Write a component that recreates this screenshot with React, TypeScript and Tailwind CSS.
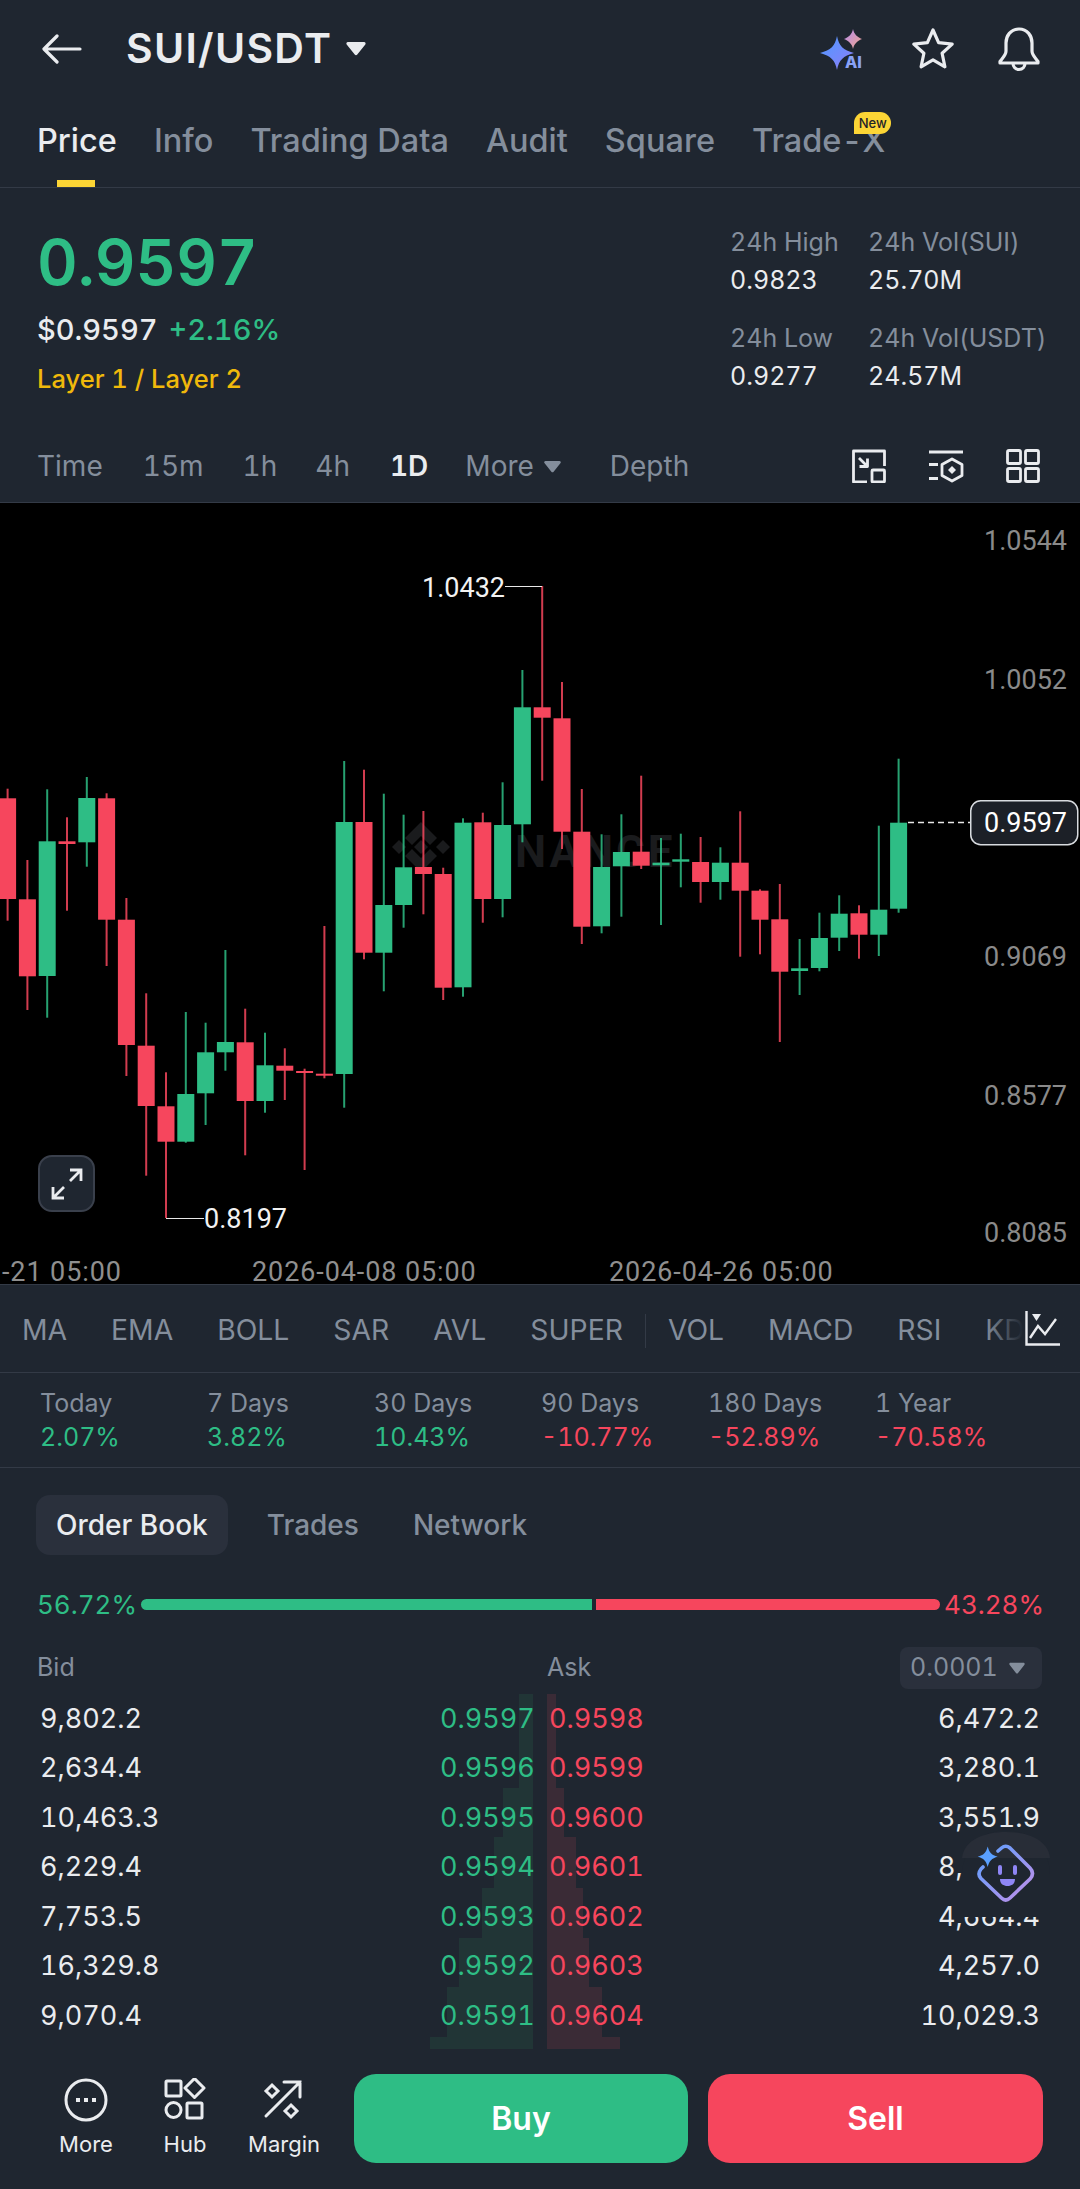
import React from 'react';

type Candle = [number, number, number, number, 'r' | 'g'];

const UP = '#2ebd85';
const DOWN = '#f6465d';

// high, body top, body bottom, low
const candles: Candle[] = [
  [788.7, 798.3, 899, 920.7, 'r'],
  [860, 899.3, 976.3, 1010, 'r'],
  [789.3, 841.3, 976, 1017.7, 'g'],
  [817.3, 841.3, 844, 910.7, 'r'],
  [777, 798, 842.3, 866.7, 'g'],
  [793.3, 798.3, 919.7, 966, 'r'],
  [898, 919.7, 1045, 1076, 'r'],
  [993.3, 1045.7, 1106, 1175.7, 'r'],
  [1072.3, 1106.3, 1141.7, 1218, 'r'],
  [1012, 1094, 1141.7, 1142.7, 'g'],
  [1022.7, 1052.3, 1093.3, 1125, 'g'],
  [950, 1042, 1052.3, 1070.7, 'g'],
  [1008.7, 1042.3, 1101, 1155.3, 'r'],
  [1032.7, 1065.3, 1101, 1112.7, 'g'],
  [1048.3, 1065.7, 1070.7, 1100, 'r'],
  [1068.7, 1071, 1073, 1170, 'r'],
  [926, 1073.7, 1075.7, 1078.3, 'r'],
  [761, 822, 1074, 1107.7, 'g'],
  [769.7, 822, 952.7, 959.3, 'r'],
  [793.7, 905, 952.7, 991.3, 'g'],
  [814.7, 867.3, 905, 927.7, 'g'],
  [811, 867, 874, 914.3, 'r'],
  [867.7, 874, 987.7, 1000, 'r'],
  [818.3, 822.7, 987.3, 996.7, 'g'],
  [812.7, 822.3, 899, 922.7, 'r'],
  [782.3, 825, 899, 917.3, 'g'],
  [670, 707.3, 824.3, 842.3, 'g'],
  [586, 707.3, 717.7, 780.7, 'r'],
  [682, 718.3, 831.7, 849, 'r'],
  [789, 831.7, 926.7, 944, 'r'],
  [834.3, 867, 926.3, 933.3, 'g'],
  [814.3, 852, 866.3, 916.7, 'g'],
  [775.7, 851.7, 865.7, 869, 'r'],
  [838, 862.7, 865.3, 925, 'g'],
  [833.7, 859.3, 861.7, 887.3, 'g'],
  [837, 862, 882, 902.7, 'r'],
  [847.3, 862.7, 882, 899.7, 'g'],
  [811.3, 862.7, 890.7, 956.7, 'r'],
  [889.3, 890.7, 919.7, 954.3, 'r'],
  [884, 919.3, 971.7, 1042, 'r'],
  [939, 968.3, 971, 995, 'g'],
  [912.7, 938, 968, 971.3, 'g'],
  [895.3, 913.7, 937.7, 951, 'g'],
  [905.3, 913.3, 934.7, 958.7, 'r'],
  [825.7, 909.7, 934.7, 956, 'g'],
  [758.7, 822.7, 908.7, 912.7, 'g'],
];

const axis: [string, number][] = [
  ['1.0544', 550],
  ['1.0052', 689],
  ['0.9069', 966],
  ['0.8577', 1105],
  ['0.8085', 1242],
];

const CandleChart = () => (
  <svg viewBox="0 503 1080 781" className="block h-[781px] w-[1080px] overflow-visible [font-family:Roboto,sans-serif]">
    <rect x="0" y="503" width="1080" height="781" fill="#000" />
    <g fill="#1a1b1d">
      <polygon points="421,822 437,838 430,845 421,836 412,845 405,838" />
      <polygon points="421,872 405,856 412,849 421,858 430,849 437,856" />
      <polygon points="392,847 399,840 406,847 399,854" />
      <polygon points="436,847 443,840 450,847 443,854" />
      <polygon points="421,840 428,847 421,854 414,847" />
      <text x="515" y="867" fontSize="44" fontWeight="700" letterSpacing="3">NANCE</text>
    </g>
    {candles.map(([high, top, bottom, low, side], i) => {
      const x = 7.6 + i * 19.8;
      const color = side === 'g' ? UP : DOWN;
      return (
        <g key={i}>
          <rect x={x - 1} y={high} width="2" height={low - high} fill={color} fillOpacity="0.85" />
          <rect x={x - 8.5} y={top} width="17" height={bottom - top} fill={color} />
        </g>
      );
    })}
    <path d="M505 586.5H542M166 1218.5H204" stroke="#e8e8e8" strokeWidth="1" />
    <text x="422" y="597" fontSize="27" fill="#f2f2f2">1.0432</text>
    <text x="204" y="1228" fontSize="27" fill="#f2f2f2">0.8197</text>
    {axis.map(([label, y]) => (
      <text key={label} x="1067" y={y} textAnchor="end" fontSize="27" fill="#8a8a8a">{label}</text>
    ))}
    <path d="M908 822.5H971" stroke="#e8e8e8" strokeWidth="1.5" strokeDasharray="6 4" />
    <rect x="970.75" y="800.75" width="107" height="44" rx="10" fill="#1c2027" stroke="#d8dbdf" strokeWidth="1.5" />
    <text x="1067" y="832" textAnchor="end" fontSize="27" fill="#fff">0.9597</text>
    <g fontSize="27" fill="#8f8f8f" letterSpacing="0.9">
      <text x="2" y="1281">-21 05:00</text>
      <text x="252" y="1281">2026-04-08 05:00</text>
      <text x="609" y="1281">2026-04-26 05:00</text>
    </g>
  </svg>
);

const Caret = ({ className }: { className: string }) => (
  <svg viewBox="0 0 20 14" className={className} fill="currentColor">
    <path d="M2.5 1h15c1.2 0 1.9 1.3 1.2 2.3l-7.5 9.4c-.6.8-1.8.8-2.4 0L1.3 3.3C.6 2.3 1.3 1 2.5 1z" />
  </svg>
);

const AiIcon = () => (
  <svg width="50" height="50" viewBox="0 0 50 50">
    <defs>
      <linearGradient id="aiBig" x1="0" y1="0" x2="1" y2="1">
        <stop offset="0" stopColor="#4d9bff" />
        <stop offset="1" stopColor="#8f7cf8" />
      </linearGradient>
      <linearGradient id="aiSmall" x1="0" y1="0" x2="1" y2="1">
        <stop offset="0" stopColor="#b68cf2" />
        <stop offset="1" stopColor="#f0a58a" />
      </linearGradient>
    </defs>
    <path d="M18 12C20 22 24 26 35 29 24 32 20 36 18 46 16 36 12 32 1 29 12 26 16 22 18 12z" fill="url(#aiBig)" />
    <path d="M34 5c1 5 4 8 9 10-5 2-8 5-9 10-1-5-4-8-9-10 5-2 8-5 9-10z" fill="url(#aiSmall)" />
    <text x="26" y="44" fontSize="16" fontWeight="800" fill="#8aa2f7">AI</text>
  </svg>
);

const StarIcon = () => (
  <svg width="46" height="46" viewBox="0 0 46 46" fill="none" stroke="#eaecef" strokeWidth="3.2" strokeLinejoin="round">
    <path d="M23 4l5.600 12.600 13.600 1.500-10.100 9.200 2.800 13.500L23 33.900l-11.900 6.900 2.800-13.500L3.800 18.100l13.600-1.500z" />
  </svg>
);

const BellIcon = () => (
  <svg width="44" height="46" viewBox="0 0 44 46" fill="none" stroke="#eaecef" strokeWidth="3.2" strokeLinejoin="round">
    <path d="M22 3C13.500 3 9 10 9 17v8c0 4-3 6.500-6 10.500V37h38v-1.500c-3-4-6-6.500-6-10.500v-8c0-7-4.500-14-13-14z" />
    <path d="M16 37c0 4 2.500 6.500 6 6.500s6-2.500 6-6.500" />
  </svg>
);

const ResizeIcon = () => (
  <svg width="34" height="34" viewBox="0 0 34 34" fill="none" stroke="#eaecef" strokeWidth="2.800" strokeLinejoin="round">
    <path d="M32.500 17V2H1.500v31H15" />
    <rect x="20" y="21" width="12.500" height="12" rx="1" />
    <path d="M7 9l8.500 8.500M15.500 9.500v8H7.500" />
  </svg>
);

const HexIcon = () => (
  <svg width="36" height="34" viewBox="0 0 36 34" fill="none" stroke="#eaecef" strokeWidth="2.800" strokeLinejoin="round">
    <path d="M1 3h34M1 15.500h9M1 29.500h9" />
    <path d="M24 10l10 5.500v11L24 32l-10-5.500v-11z" />
    <path d="M24 17l4 4-4 4-4-4z" fill="#eaecef" stroke="none" />
  </svg>
);

const GridIcon = () => (
  <svg width="34" height="34" viewBox="0 0 34 34" fill="none" stroke="#eaecef" strokeWidth="2.800">
    <rect x="1.500" y="1.500" width="13" height="13" rx="1.500" />
    <rect x="19.500" y="1.500" width="13" height="13" rx="1.500" />
    <rect x="1.500" y="19.500" width="13" height="13" rx="1.500" />
    <rect x="19.500" y="19.500" width="13" height="13" rx="1.500" />
  </svg>
);

const ExpandIcon = () => (
  <svg width="34" height="34" viewBox="0 0 34 34" fill="none" stroke="#eaecef" strokeWidth="2.800">
    <path d="M20 14L31 3M20 3h11v11M14 20L3 31M14 31H3V20" />
  </svg>
);

const IndicatorIcon = () => (
  <svg width="36" height="36" viewBox="0 0 36 36" fill="none" stroke="#eaecef" strokeWidth="2.400">
    <path d="M1.500 0v33.500H35" />
    <path d="M5 27l8-12 7 8 11-15" />
    <path d="M7 3h9l-4.500 7z" fill="#eaecef" stroke="none" />
  </svg>
);

const MoreIcon = () => (
  <svg width="44" height="44" viewBox="0 0 44 44" fill="none" stroke="#eaecef" strokeWidth="3">
    <circle cx="22" cy="22" r="20" />
    <path d="M12 22h4M20 22h4M28 22h4" strokeWidth="4" />
  </svg>
);

const HubIcon = () => (
  <svg width="44" height="44" viewBox="0 0 44 44" fill="none" stroke="#eaecef" strokeWidth="3">
    <rect x="3" y="3" width="15" height="15" rx="1" />
    <path d="M31.500 0.500l9.500 9.500-9.500 9.500-9.500-9.500z" strokeLinejoin="round" />
    <circle cx="10.500" cy="32" r="7.500" />
    <rect x="24" y="25" width="15" height="15" rx="1" />
  </svg>
);

const MarginIcon = () => (
  <svg width="44" height="44" viewBox="0 0 44 44" fill="none" stroke="#eaecef" strokeWidth="3" strokeLinecap="round">
    <path d="M4 38L38 4M22 4h16v15" />
    <path d="M10 7l6 6-6 6-6-6z" />
    <path d="M29 27l6 6-6 6-6-6z" />
  </svg>
);

const AssistantIcon = () => (
  <svg width="88" height="87" viewBox="0 0 88 87" fill="none">
    <defs>
      <linearGradient id="bot" x1="0" y1="0" x2="1" y2="1">
        <stop offset="0" stopColor="#5aa0ff" />
        <stop offset="1" stopColor="#c48fe8" />
      </linearGradient>
    </defs>
    <path d="M0 28C2 10 22 2 44 2s42 8 44 26z" fill="#282d37" />
    <path
      d="M36 21L39.500 18Q43.700 14.500 48 18L68 38Q73 43.300 68 49L48 68Q43.700 72 39.500 68L19 48.500Q15 44 19 39L21 37"
      stroke="url(#bot)"
      strokeWidth="3.600"
      strokeLinecap="round"
      strokeLinejoin="round"
    />
    <path d="M25.700 16.500c1.500 6 4 8.700 10 10.200-6 1.500-8.500 4.200-10 10.300-1.500-6.100-4-8.800-10-10.300 6-1.500 8.500-4.200 10-10.200z" fill="#5aa0ff" />
    <rect x="36" y="35" width="4" height="10" rx="2" fill="#8f86f5" />
    <rect x="51" y="35" width="4" height="10" rx="2" fill="#8f86f5" />
    <path d="M38 49h15c0 5-3.500 7-7.500 7s-7.500-2-7.500-7z" fill="#8f86f5" />
  </svg>
);

const tabs = ['Info', 'Trading Data', 'Audit', 'Square'];
const indicators = ['MA', 'EMA', 'BOLL', 'SAR', 'AVL', 'SUPER'];
const subIndicators = ['VOL', 'MACD', 'RSI', 'KDJ'];

const returns = [
  ['Today', '2.07%', UP],
  ['7 Days', '3.82%', UP],
  ['30 Days', '10.43%', UP],
  ['90 Days', '-10.77%', DOWN],
  ['180 Days', '-52.89%', DOWN],
  ['1 Year', '-70.58%', DOWN],
];

const book = [
  ['9,802.2', '0.9597', '0.9598', '6,472.2'],
  ['2,634.4', '0.9596', '0.9599', '3,280.1'],
  ['10,463.3', '0.9595', '0.9600', '3,551.9'],
  ['6,229.4', '0.9594', '0.9601', '8,412.6'],
  ['7,753.5', '0.9593', '0.9602', '4,664.4'],
  ['16,329.8', '0.9592', '0.9603', '4,257.0'],
  ['9,070.4', '0.9591', '0.9604', '10,029.3'],
];

// bid left edge, ask right edge, top and bottom of each depth step
const depth = [
  [519, 556, 0, 94],
  [503, 564, 94, 143],
  [494, 576, 143, 194],
  [482, 583, 194, 244],
  [459, 589, 244, 293],
  [447, 602, 293, 343],
  [430, 620, 343, 355],
];

export default function App() {
  return (
    <div className="flex h-[2189px] w-[1080px] flex-col overflow-hidden bg-[#1f2630] tabular-nums text-[#eaecef] [font-family:Inter,'Noto_Sans',sans-serif]">
      <header className="flex h-[96px] items-center pl-[42px] pr-[39px] pt-[1px]">
        <svg width="40" height="30" viewBox="0 0 40 30" fill="none" stroke="#eaecef" strokeWidth="3.200" strokeLinecap="round" strokeLinejoin="round">
          <path d="M38 15H3M15 2L2 15l13 13" />
        </svg>
        <h1 className="ml-[44px] text-[41px] font-semibold tracking-[1.3px]">SUI/USDT</h1>
        <Caret className="ml-[13px] h-[15px] w-[22px]" />
        <div className="ml-auto flex items-center gap-[41px]">
          <AiIcon />
          <StarIcon />
          <BellIcon />
        </div>
      </header>

      <nav className="flex h-[92px] items-start gap-[37px] border-b border-[#333a46] pl-[37px] pt-[23px] text-[32.5px] font-medium leading-[44px] text-[#848e9c]">
        <div className="relative text-[#eaecef]">
          Price
          <div className="absolute left-[20px] top-[61px] h-[7px] w-[38px] bg-[#fcd535]" />
        </div>
        {tabs.map((t) => (
          <div key={t}>{t}</div>
        ))}
        <div className="relative">
          Trade-X
          <div className="absolute right-[-6px] top-[-7px] flex h-[22px] w-[37px] items-center justify-center rounded-full rounded-bl-none bg-[#fcd535] text-[13px] font-medium leading-none text-[#1e2329]">
            New
          </div>
        </div>
      </nav>

      <section className="flex h-[242px] justify-between pl-[37px] pt-[36px]">
        <div>
          <div className="text-[63px] font-semibold leading-[76px] text-[#2ebd85]">0.9597</div>
          <div className="mt-[10px] flex gap-[11px] text-[29px] font-medium leading-[40px]">
            <span>$0.9597</span>
            <span className="text-[#2ebd85]">+2.16%</span>
          </div>
          <div className="mt-[11px] text-[25.500px] font-medium leading-[36px] text-[#f0b90b]">Layer 1 / Layer 2</div>
        </div>
        <div className="grid h-fit w-[350px] grid-cols-[138px_1fr] gap-y-[22px] text-[25px] leading-[36px]">
          <div>
            <div className="text-[#848e9c]">24h High</div>
            <div className="mt-[2px]">0.9823</div>
          </div>
          <div>
            <div className="text-[#848e9c]">24h Vol(SUI)</div>
            <div className="mt-[2px]">25.70M</div>
          </div>
          <div>
            <div className="text-[#848e9c]">24h Low</div>
            <div className="mt-[2px]">0.9277</div>
          </div>
          <div>
            <div className="text-[#848e9c]">24h Vol(USDT)</div>
            <div className="mt-[2px]">24.57M</div>
          </div>
        </div>
      </section>

      <div className="flex h-[73px] items-center border-b border-[#333a46] pl-[37px] pr-[40px] text-[28px] text-[#848e9c]">
        <span>Time</span>
        <span className="ml-[40px]">15m</span>
        <span className="ml-[39px]">1h</span>
        <span className="ml-[38px]">4h</span>
        <span className="ml-[40px] font-semibold text-[#eaecef]">1D</span>
        <span className="ml-[37px]">More</span>
        <Caret className="ml-[9px] h-[13px] w-[19px]" />
        <span className="ml-[48px]">Depth</span>
        <div className="ml-auto flex items-center gap-[42px]">
          <ResizeIcon />
          <HexIcon />
          <GridIcon />
        </div>
      </div>

      <div className="relative">
        <CandleChart />
        <div className="absolute left-[38px] top-[652px] flex h-[57px] w-[57px] items-center justify-center rounded-[14px] border-2 border-[#3a404c] bg-[#1f2630]">
          <ExpandIcon />
        </div>
      </div>

      <div className="relative flex h-[89px] items-center gap-[44px] overflow-hidden border-y border-[#333a46] pl-[22px] pt-[4px] text-[28.300px] text-[#848e9c]">
        {indicators.map((t) => (
          <span key={t}>{t}</span>
        ))}
        <div className="-mx-[22px] h-[34px] w-px bg-[#333a46]" />
        {subIndicators.map((t) => (
          <span key={t}>{t}</span>
        ))}
        <div className="absolute bottom-0 right-0 top-0 flex w-[95px] items-center justify-end bg-gradient-to-r from-transparent via-[#1f2630] via-[40%] to-[#1f2630] pr-[19px]">
          <IndicatorIcon />
        </div>
      </div>

      <div className="flex h-[95px] items-center border-b border-[#333a46] pl-[40px]">
        {returns.map(([label, value, color]) => (
          <div key={label} className="w-[167px] text-[25px] leading-[34px]">
            <div className="text-[#848e9c]">{label}</div>
            <div style={{ color }}>{value}</div>
          </div>
        ))}
      </div>

      <div className="mt-[27px] flex h-[60px] items-center pl-[36px] text-[28px] text-[#848e9c]">
        <div className="flex h-full items-center rounded-[14px] bg-[#2a303c] px-[20px] font-medium text-[#eaecef]">Order Book</div>
        <span className="ml-[39px] font-medium">Trades</span>
        <span className="ml-[54px] font-medium">Network</span>
      </div>

      <div className="mt-[31px] flex h-[36px] items-center pl-[37px] pr-[36px] text-[26px]">
        <span className="w-[104px] text-[#2ebd85]">56.72%</span>
        <div className="h-[11px] w-[451px] rounded-l-full bg-[#2ebd85]" />
        <div className="ml-[4px] h-[11px] w-[344px] rounded-r-full bg-[#f6465d]" />
        <span className="ml-auto text-[#f6465d]">43.28%</span>
      </div>

      <div className="mt-[25px] flex h-[42px] items-center pl-[37px] pr-[38px] text-[25px] text-[#848e9c]">
        <span className="w-[510px]">Bid</span>
        <span>Ask</span>
        <div className="ml-auto flex h-full w-[142px] items-center gap-[10px] rounded-[8px] bg-[#2a303c] pl-[10px]">
          <span>0.0001</span>
          <Caret className="h-[12px] w-[18px]" />
        </div>
      </div>

      <div className="relative mt-[5px] h-[355px]">
        <svg className="absolute inset-0 h-[355px] w-[1080px]" viewBox="0 0 1080 355">
          {depth.map(([bid, ask, top, bottom]) => (
            <g key={top}>
              <rect x={bid} y={top} width={533 - bid} height={bottom - top} fill="#213536" />
              <rect x="547" y={top} width={ask - 547} height={bottom - top} fill="#3a2b36" />
            </g>
          ))}
        </svg>
        {book.map(([bidQty, bid, ask, askQty]) => (
          <div key={bid} className="relative flex h-[49.500px] items-center pl-[40px] pr-[40px] text-[27px]">
            <span>{bidQty}</span>
            <span className="ml-auto w-[90px] text-right text-[#2ebd85]">{bid}</span>
            <span className="ml-[19px] w-[90px] text-[#f6465d]">{ask}</span>
            <span className="w-[401px] text-right">{askQty}</span>
          </div>
        ))}
        <div className="absolute left-[962px] top-[136px] h-[87px] w-[88px] rounded-t-[44px] bg-[#1f2630]">
          <AssistantIcon />
        </div>
      </div>

      <footer className="flex flex-1 items-start pl-[56px] pr-[37px] pt-[25px]">
        <div className="flex w-[298px] pt-[4px] text-[22px] leading-[30px]">
          <div className="flex w-[60px] flex-col items-center">
            <MoreIcon />
            <span className="mt-[7px]">More</span>
          </div>
          <div className="ml-[39px] flex w-[60px] flex-col items-center">
            <HubIcon />
            <span className="mt-[7px]">Hub</span>
          </div>
          <div className="ml-[39px] flex w-[60px] flex-col items-center whitespace-nowrap">
            <MarginIcon />
            <span className="mt-[7px]">Margin</span>
          </div>
        </div>
        <button className="flex h-[89px] w-[334px] items-center justify-center rounded-[22px] bg-[#2ebd85] text-[32px] font-semibold text-white">
          Buy
        </button>
        <button className="ml-[20px] flex h-[89px] w-[335px] items-center justify-center rounded-[22px] bg-[#f6465d] text-[32px] font-semibold text-white">
          Sell
        </button>
      </footer>
    </div>
  );
}
